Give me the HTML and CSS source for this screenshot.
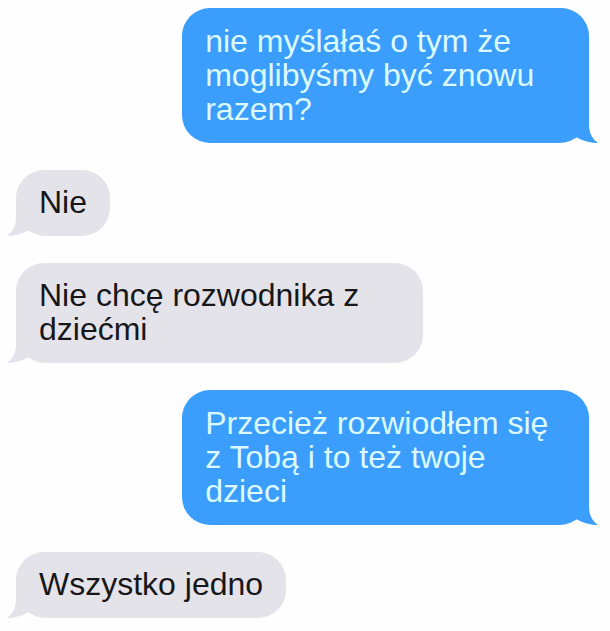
FILE: index.html
```html
<!DOCTYPE html>
<html lang="pl">
	<head>
		<meta charset="UTF-8">
		<meta name="viewport" content="width=device-width, initial-scale=1">
		<title>Wiadomości</title>
		<link rel="stylesheet" href="styles.css">
	</head>
	<body>
		<!-- tail shape, shared by all bubbles -->
		<svg class="defs" width="0" height="0" aria-hidden="true">
			<symbol id="tail" viewBox="0 0 40 30">
				<path d="M12 0 H30 V10 C30 19 32 25 39 30 C32 30 24 28 17 24 L12 20 Z"/>
			</symbol>
		</svg>
		<main class="chat">
			<div class="msg sent">
				<svg class="tail" aria-hidden="true"><use href="#tail"/></svg>
				<p>nie myślałaś o tym że moglibyśmy być znowu razem?</p>
			</div>
			<div class="msg received">
				<svg class="tail" aria-hidden="true"><use href="#tail"/></svg>
				<p>Nie</p>
			</div>
			<div class="msg received">
				<svg class="tail" aria-hidden="true"><use href="#tail"/></svg>
				<p>Nie chcę rozwodnika z dziećmi</p>
			</div>
			<div class="msg sent">
				<svg class="tail" aria-hidden="true"><use href="#tail"/></svg>
				<p>Przecież rozwiodłem się z Tobą i to też twoje dzieci</p>
			</div>
			<div class="msg received">
				<svg class="tail" aria-hidden="true"><use href="#tail"/></svg>
				<p>Wszystko jedno</p>
			</div>
		</main>
	</body>
</html>
```

FILE: styles.css
```css
body {
	margin : 0;
	background : #fefefe;
	font-family : "Liberation Sans", Arial, sans-serif;
	font-size : 32px;
	line-height : 34px;
}
p {
	position : relative;
	margin : 0;
}
.defs {
	position : absolute;
}
.chat {
	display : flex;
	flex-direction : column;
	gap : 27px;
	padding : 8px 21px 8px 16px;
}
.msg {
	position : relative;
	box-sizing : border-box;
	max-width : 71%;
	border-radius : 28px;
}
.sent {
	align-self : flex-end;
	padding : 16px 23px 17px 23px;
	border-bottom-right-radius : 30px;
	color : #dcfbff;
	background : #3b9dfc;
}
.received {
	align-self : flex-start;
	padding : 15px 23px 17px 23px;
	border-bottom-left-radius : 30px;
	color : #17171a;
	background : #e4e3e9;
}
/* sits under the text */
.tail {
	position : absolute;
	bottom : 0;
	width : 40px;
	height : 30px;
}
.sent .tail {
	right : -10px;
	fill : #3b9dfc;
}
.received .tail {
	left : -10px;
	fill : #e4e3e9;
	transform : scaleX(-1);
}
```
